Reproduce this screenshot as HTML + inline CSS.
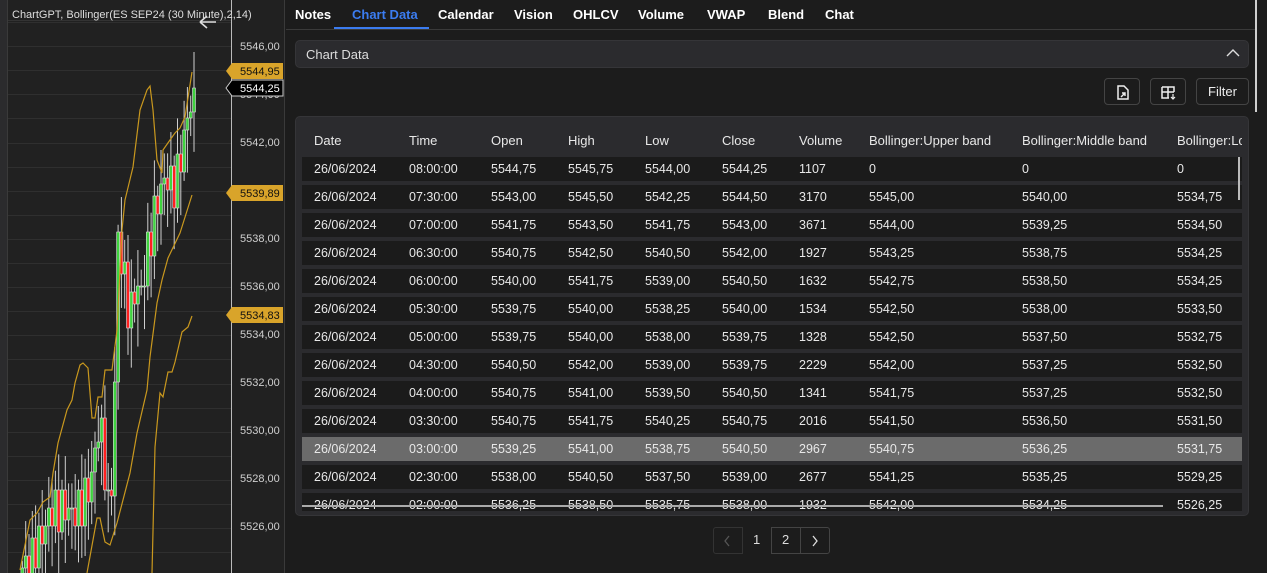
<!DOCTYPE html>
<html><head><meta charset="utf-8">
<style>
*{margin:0;padding:0;box-sizing:border-box}
html,body{width:1267px;height:573px;overflow:hidden}
body{background:#1c1c1c;font-family:"Liberation Sans",sans-serif;color:#e6e6e6;position:relative}
.abs{position:absolute}
.tab{position:absolute;top:7px;font-size:13px;font-weight:bold;color:#fff}
.cell{position:absolute;font-size:12.5px;color:#e8e8e8;white-space:nowrap}
.row{position:absolute;left:302px;width:940px;height:24px;background:#1b1b1b}
.btn{position:absolute;top:78px;height:27px;border:1px solid #444;border-radius:4px;background:#1c1c1c}
</style></head><body>
<div class="abs" style="left:0;top:0;width:7px;height:573px;background:#2b2b2d"></div>
<div class="abs" style="left:7px;top:0;width:278px;height:573px;background:#212121;border-left:1px solid #3a3a3a;border-right:1px solid #3a3a3a"></div>
<svg class="abs" style="left:0;top:0" width="286" height="573" id="ch">
<g stroke="#2f2f2f" stroke-width="1" id="grid"></g>
<line x1="231.5" y1="0" x2="231.5" y2="573" stroke="#bbb"/>
<line x1="8" y1="20.5" x2="231" y2="20.5" stroke="#333"/>
<g id="cand"></g>
<g fill="none" stroke="#c9981e" stroke-width="1.2">
<polyline points="20,570 30,520 37,513 43,502 50,497 53,473 58,443 67,410 72,400 75,383 80,365 83,363 88,368 92,418 95,418 98,397 102,397 105,370 112,370 117,330 122,230 125,200 133,167 140,110 147,90 150,86 153,110 157,160 162,173 163,150 170,140 175,133 180,128 185,117 192,72"/>
<polyline points="87,573 97,518 100,518 105,542 110,545 117,523 130,473 137,433 147,390 150,357 157,303 162,280 168,258 180,233 192,195"/>
<polyline points="152,573 155,447 160,393 163,397 168,372 172,372 175,362 182,332 188,327 192,316"/>
</g>
<g font-family="Liberation Sans" font-size="11" fill="#cfcfcf" id="ax"></g>
<polygon points="226,71 232,63 283,63 283,79 232,79" fill="#d9a42a"/>
<text x="240" y="75" font-size="11" fill="#111" font-family="Liberation Sans">5544,95</text>
<polygon points="226,88 232,80 283,80 283,96 232,96" fill="#000" stroke="#ccc"/>
<text x="240" y="92" font-size="11" fill="#fff" font-family="Liberation Sans">5544,25</text>
<polygon points="226,193 232,185 283,185 283,201 232,201" fill="#d9a42a"/>
<text x="240" y="197" font-size="11" fill="#111" font-family="Liberation Sans">5539,89</text>
<polygon points="226,315 232,307 283,307 283,323 232,323" fill="#d9a42a"/>
<text x="240" y="319" font-size="11" fill="#111" font-family="Liberation Sans">5534,83</text>
<text x="12" y="18" font-size="11" fill="#ddd" font-family="Liberation Sans">ChartGPT, Bollinger(ES SEP24 (30 Minute),2,14)</text>
<path d="M200 22 H216 M200 22 L207 16 M200 22 L207 28" stroke="#ddd" stroke-width="1.6" fill="none"/>
</svg>
<script>
(function(){
var ns="http://www.w3.org/2000/svg";
function Y(p){return 46+(5546-p)*24;}
var g=document.getElementById('grid'),ax=document.getElementById('ax');
for(var y=22;y<573;y+=24.1){var l=document.createElementNS(ns,'line');l.setAttribute('x1',8);l.setAttribute('x2',231);l.setAttribute('y1',Math.round(y)+.5);l.setAttribute('y2',Math.round(y)+.5);g.appendChild(l);}
for(var p=5546;p>=5526;p-=2){var t=document.createElementNS(ns,'text');t.setAttribute('x',240);t.setAttribute('y',Y(p)+4);t.textContent=p+',00';ax.appendChild(t);}
var an=[[22,5524.3],[30,5524.5],[50,5526.5],[60,5526.8],[75,5526.5],[90,5527.5],[100,5530.5],[110,5526],[115,5532],[118,5538],[125,5536],[130,5534.5],[135,5536],[140,5535.5],[150,5538],[157,5539.5],[165,5540.5],[175,5540],[185,5542.5],[194,5544.5]];
function f(x){for(var i=1;i<an.length;i++){if(x<=an[i][0]){var a=an[i-1],b=an[i];return a[1]+(b[1]-a[1])*(x-a[0])/(b[0]-a[0]);}}return an[an.length-1][1];}
var c=document.getElementById('cand'),prev=5524;
for(var i=0;i<53;i++){var x=194-3.3*(52-i);var n=Math.sin(i*2.7)*0.9;var cl=Math.round((f(x)+n)*4)/4;if(i==52)cl=5544.25;var o=prev;prev=cl;
var hi=Math.max(o,cl)+0.3+Math.abs(Math.sin(i*1.3))*1.2,lo=Math.min(o,cl)-0.3-Math.abs(Math.cos(i*1.7))*1.5;
if(hi>5545.8)hi=5545.8;
var w=document.createElementNS(ns,'line');w.setAttribute('x1',x);w.setAttribute('x2',x);w.setAttribute('y1',Y(hi));w.setAttribute('y2',Y(lo));w.setAttribute('stroke','#cfcfcf');w.setAttribute('stroke-width',1);c.appendChild(w);
var r=document.createElementNS(ns,'rect');r.setAttribute('x',x-1.5);r.setAttribute('width',3);var t1=Y(Math.max(o,cl)),t2=Y(Math.min(o,cl));r.setAttribute('y',t1);r.setAttribute('height',Math.max(1,t2-t1));r.setAttribute('fill',cl>=o?'#3fd33f':'#ff2020');r.setAttribute('stroke','#ddd');r.setAttribute('stroke-width',0.6);c.appendChild(r);}
})();
</script>
<div class="abs" style="left:286px;top:29px;width:970px;height:1px;background:#3a3a3a"></div>
<div class="tab" style="left:295px">Notes</div>
<div class="tab" style="left:352px;color:#3b7cf0">Chart Data</div>
<div class="abs" style="left:334px;top:27px;width:95px;height:2px;background:#3b7cf0"></div>
<div class="tab" style="left:438px">Calendar</div>
<div class="tab" style="left:514px">Vision</div>
<div class="tab" style="left:573px">OHLCV</div>
<div class="tab" style="left:638px">Volume</div>
<div class="tab" style="left:707px">VWAP</div>
<div class="tab" style="left:768px">Blend</div>
<div class="tab" style="left:825px">Chat</div>
<div class="abs" style="left:1255px;top:0;width:2px;height:112px;background:#cfcfcf"></div>
<div class="abs" style="left:295px;top:40px;width:954px;height:28px;background:#2b2b2e;border:1px solid #353538;border-radius:5px"></div>
<div class="abs" style="left:306px;top:47px;font-size:13px;color:#ddd">Chart Data</div>
<svg class="abs" style="left:1226px;top:48px" width="14" height="10"><path d="M1 8 L7 2 L13 8" stroke="#ddd" stroke-width="1.4" fill="none"/></svg>
<div class="btn" style="left:1104px;width:36px"><svg width="36" height="27"><path d="M13 7 H19 L23 11 V20 H13 Z" fill="none" stroke="#eee" stroke-width="1.5"/><path d="M16 18 L20 14 M17 14 H20 V17" stroke="#eee" stroke-width="1.4" fill="none"/></svg></div>
<div class="btn" style="left:1150px;width:36px"><svg width="36" height="27"><path d="M11 8 H23 V13 M11 8 V19 H18 M11 13 H23 M17 8 V19" fill="none" stroke="#eee" stroke-width="1.5"/><path d="M22 15 V20 M20 18 L22 20 L24 18" stroke="#eee" stroke-width="1.2" fill="none"/></svg></div>
<div class="btn" style="left:1196px;width:53px;font-size:13px;color:#eee;text-align:center;line-height:25px">Filter</div>
<div class="abs" style="left:295px;top:116px;width:954px;height:400px;background:#2b2b2e;border:1px solid #353538;border-radius:5px"></div>
<div id="tbl"></div>
<script>
(function(){
var cols=[314,409,491,568,645,722,799,869,1022,1177];
var hd=["Date","Time","Open","High","Low","Close","Volume","Bollinger:Upper band","Bollinger:Middle band","Bollinger:Lo"];
var rows=[
["08:00:00","5544,75","5545,75","5544,00","5544,25","1107","0","0","0"],
["07:30:00","5543,00","5545,50","5542,25","5544,50","3170","5545,00","5540,00","5534,75"],
["07:00:00","5541,75","5543,50","5541,75","5543,00","3671","5544,00","5539,25","5534,50"],
["06:30:00","5540,75","5542,50","5540,50","5542,00","1927","5543,25","5538,75","5534,25"],
["06:00:00","5540,00","5541,75","5539,00","5540,50","1632","5542,75","5538,50","5534,25"],
["05:30:00","5539,75","5540,00","5538,25","5540,00","1534","5542,50","5538,00","5533,50"],
["05:00:00","5539,75","5540,00","5538,00","5539,75","1328","5542,50","5537,50","5532,75"],
["04:30:00","5540,50","5542,00","5539,00","5539,75","2229","5542,00","5537,25","5532,50"],
["04:00:00","5540,75","5541,00","5539,50","5540,50","1341","5541,75","5537,25","5532,50"],
["03:30:00","5540,75","5541,75","5540,25","5540,75","2016","5541,50","5536,50","5531,50"],
["03:00:00","5539,25","5541,00","5538,75","5540,50","2967","5540,75","5536,25","5531,75"],
["02:30:00","5538,00","5540,50","5537,50","5539,00","2677","5541,25","5535,25","5529,25"],
["02:00:00","5536,25","5538,50","5535,75","5538,00","1932","5542,00","5534,25","5526,25"]];
var h='';
for(var i=0;i<10;i++)h+='<div class="cell" style="left:'+cols[i]+'px;top:133px;font-size:13px;'+(i==9?'width:65px;overflow:hidden':'')+'">'+hd[i]+'</div>';
for(var r=0;r<13;r++){var t=157+r*28;var hgt=r==12?18:24;
h+='<div class="row" style="top:'+t+'px;height:'+hgt+'px;overflow:hidden;'+(r==10?'background:#6b6b6b':'')+'">';
var v=["26/06/2024"].concat(rows[r]);
for(var k=0;k<10;k++)h+='<div class="cell" style="left:'+(cols[k]-302)+'px;top:5px">'+v[k]+'</div>';
h+='</div>';}
document.getElementById('tbl').innerHTML=h;
})();
</script>
<div class="abs" style="left:1238px;top:157px;width:2px;height:43px;background:#bbb"></div>
<div class="abs" style="left:302px;top:505px;width:861px;height:2px;background:#aaa"></div>
<div class="abs" style="left:713px;top:527px;width:30px;height:27px;border:1px solid #333;border-radius:3px 0 0 3px"></div>
<svg class="abs" style="left:722px;top:534px" width="10" height="14"><path d="M7 2 L3 7 L7 12" stroke="#555" stroke-width="1.3" fill="none"/></svg>
<div class="abs" style="left:753px;top:532px;font-size:13px;color:#ddd">1</div>
<div class="abs" style="left:771px;top:527px;width:59px;height:27px;border:1px solid #444;border-radius:0 3px 3px 0"></div>
<div class="abs" style="left:800px;top:527px;width:1px;height:27px;background:#444"></div>
<div class="abs" style="left:782px;top:532px;font-size:13px;color:#ddd">2</div>
<svg class="abs" style="left:810px;top:534px" width="10" height="14"><path d="M3 2 L7 7 L3 12" stroke="#ddd" stroke-width="1.3" fill="none"/></svg>
</body></html>
